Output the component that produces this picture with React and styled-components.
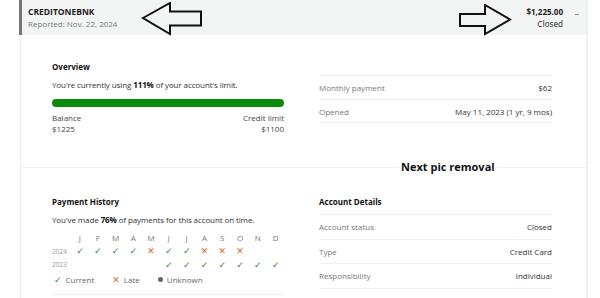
import React from 'react';
import styled, { createGlobalStyle } from 'styled-components';

const GlobalStyle = createGlobalStyle`
	html, body {
		margin: 0;
		padding: 0;
		background: #ffffff;
		font-family: 'Open Sans', 'Liberation Sans', sans-serif;
		color: #222;
	}
`;

const months = ['J', 'F', 'M', 'A', 'M', 'J', 'J', 'A', 'S', 'O', 'N', 'D'];
const history = [
	{ year: '2024', marks: ['c', 'c', 'c', 'c', 'l', 'c', 'c', 'l', 'l', 'l', '', ''] },
	{ year: '2023', marks: ['', '', '', '', '', 'c', 'c', 'c', 'c', 'c', 'c', 'c'] },
];

function Arrow({ dir }) {
	if (dir === 'left') {
		return (
			<svg width="62" height="34" viewBox="0 0 62 34">
				<path d="M2 16 L29 1 L29 9.5 L60 9.5 L60 23.5 L29 23.5 L29 32 Z" fill="none" stroke="#111" strokeWidth="2" strokeLinejoin="miter" />
			</svg>
		);
	}
	return (
		<svg width="54" height="32" viewBox="0 0 54 32">
			<path d="M1 10 L26 10 L26 1 L51 15.5 L26 30 L26 22 L1 22 Z" fill="none" stroke="#111" strokeWidth="2" strokeLinejoin="miter" />
		</svg>
	);
}

export default function App() {
	return (
		<>
			<GlobalStyle />
			<Page>
				<Card>
					<Header>
						<div>
							<Creditor>CREDITONEBNK</Creditor>
							<SubText>Reported: Nov. 22, 2024</SubText>
						</div>
						<HeaderRight>
							<div>
								<Amount>$1,225.00</Amount>
								<Status>Closed</Status>
							</div>
							<Toggle />
						</HeaderRight>
						<LeftArrow>
							<Arrow dir="left" />
						</LeftArrow>
						<RightArrow>
							<Arrow dir="right" />
						</RightArrow>
					</Header>

					<Section $divider>
						<Column>
							<Title>Overview</Title>
							<Text>
								You're currently using <b>111%</b> of your account's limit.
							</Text>
							<Bar />
							<Split>
								<span>Balance</span>
								<span>Credit limit</span>
							</Split>
							<Split>
								<span>$1225</span>
								<span>$1100</span>
							</Split>
						</Column>
						<Column $pad={40}>
							<Rows>
								<Row>
									<Label>Monthly payment</Label>
									<Value>$62</Value>
								</Row>
								<Row>
									<Label>Opened</Label>
									<Value>May 11, 2023 (1 yr, 9 mos)</Value>
								</Row>
							</Rows>
						</Column>
						<Note>Next pic removal</Note>
					</Section>

					<Section>
						<Column>
							<Title>Payment History</Title>
							<Text>
								You've made <b>76%</b> of payments for this account on time.
							</Text>
							<Grid>
								<span />
								{months.map((m, i) => (
									<Month key={i}>{m}</Month>
								))}
								{history.map((h) => (
									<React.Fragment key={h.year}>
										<Year>{h.year}</Year>
										{h.marks.map((mk, i) => (
											<Mark key={i} $late={mk === 'l'}>
												{mk === 'c' ? '✓' : mk === 'l' ? '✕' : ''}
											</Mark>
										))}
									</React.Fragment>
								))}
							</Grid>
							<Legend>
								<LegendItem>
									<Mark as="span">✓</Mark> Current
								</LegendItem>
								<LegendItem>
									<Mark as="span" $late>✕</Mark> Late
								</LegendItem>
								<LegendItem>
									<Dot /> Unknown
								</LegendItem>
							</Legend>
							<Rule />
						</Column>
						<Column>
							<Title>Account Details</Title>
							<Rows $top={6}>
								<Row $h={24.5}>
									<Label>Account status</Label>
									<Value>Closed</Value>
								</Row>
								<Row $h={24.5}>
									<Label>Type</Label>
									<Value>Credit Card</Value>
								</Row>
								<Row $h={24.5}>
									<Label>Responsibility</Label>
									<Value>Individual</Value>
								</Row>
								<Row $h={24.5}>
									<Label>Remarks</Label>
									<Value>Closed or paid account/zero balance</Value>
								</Row>
							</Rows>
						</Column>
					</Section>
				</Card>
			</Page>
		</>
	);
}

const Page = styled.div`
	width: 600px;
	height: 298px;
	overflow: hidden;
	padding-left: 20px;
	box-sizing: border-box;
`;

const Card = styled.div`
	width: 565px;
	border-left: 1px solid #eeeeee;
	border-right: 2px solid #f0f0f0;
	min-height: 400px;
`;

const Header = styled.div`
	position: relative;
	height: 35px;
	margin-left: -2px;
	border-left: 3px solid #767676;
	background: #f3f4f4;
	display: flex;
	justify-content: space-between;
	align-items: center;
	padding: 0 7px 0 6px;
	box-sizing: border-box;
`;

const Creditor = styled.div`
	font-size: 8.5px;
	font-weight: 700;
	color: #222;
	line-height: 13px;
`;

const SubText = styled.div`
	font-size: 8px;
	color: #7a7a7a;
	line-height: 12px;
`;

const HeaderRight = styled.div`
	display: flex;
	align-items: flex-start;
	gap: 12px;
	text-align: right;
`;

const Amount = styled.div`
	font-size: 8px;
	font-weight: 700;
	line-height: 12px;
`;

const Status = styled.div`
	font-size: 8px;
	font-weight: 600;
	color: #555;
	line-height: 12px;
`;

const Toggle = styled.span`
	width: 4px;
	height: 1.5px;
	margin-top: 8px;
	background: #999;
`;

const LeftArrow = styled.div`
	position: absolute;
	left: 119px;
	top: 2px;
	line-height: 0;
`;

const RightArrow = styled.div`
	position: absolute;
	left: 437px;
	top: 4px;
	line-height: 0;
`;

const Section = styled.div`
	position: relative;
	display: grid;
	grid-template-columns: 232px 233px;
	column-gap: 35px;
	padding: ${(p) => (p.$divider ? '26px 31px 0' : '28px 31px 0')};
	height: ${(p) => (p.$divider ? '133px' : 'auto')};
	box-sizing: border-box;
	border-bottom: ${(p) => (p.$divider ? '1px solid #f0f0f0' : 'none')};
`;

const Column = styled.div`
	display: flex;
	flex-direction: column;
	padding-top: ${(p) => (p.$pad ? `${p.$pad - 26}px` : '0')};
`;

const Title = styled.div`
	font-size: 8px;
	font-weight: 700;
	color: #111;
	line-height: 12px;
`;

const Text = styled.div`
	font-size: 8px;
	color: #333;
	line-height: 12px;
	margin-top: 6px;
	letter-spacing: -0.1px;

	b {
		font-weight: 700;
		color: #111;
	}
`;

const Bar = styled.div`
	height: 8px;
	border-radius: 4px;
	background: #0b8a0b;
	margin: 8px 0 5px;
`;

const Split = styled.div`
	display: flex;
	justify-content: space-between;
	font-size: 8px;
	color: #444;
	line-height: 11px;
`;

const Rows = styled.div`
	display: flex;
	flex-direction: column;
	margin-top: ${(p) => p.$top || 0}px;
`;

const Row = styled.div`
	display: flex;
	justify-content: space-between;
	align-items: center;
	height: ${(p) => p.$h || 24}px;
	border-top: 1px solid #f0f0f0;
	box-sizing: border-box;
	&:last-child {
		border-bottom: 1px solid #f0f0f0;
	}
`;

const Label = styled.span`
	font-size: 8px;
	color: #777;
`;

const Value = styled.span`
	font-size: 8px;
	color: #333;
`;

const Note = styled.div`
	position: absolute;
	left: 378px;
	bottom: -8px;
	padding: 0 2px;
	background: #fff;
	font-size: 11px;
	font-weight: 700;
	color: #111;
	line-height: 16px;
`;

const Grid = styled.div`
	display: grid;
	grid-template-columns: 19px repeat(12, 17.8px);
	grid-auto-rows: 13.5px;
	align-items: center;
	margin-top: 5px;
`;

const Month = styled.span`
	font-size: 8px;
	color: #777;
	text-align: center;
`;

const Year = styled.span`
	font-size: 6.5px;
	color: #999;
`;

const Mark = styled.span`
	font-size: 9px;
	text-align: center;
	font-family: 'DejaVu Sans', sans-serif;
	color: ${(p) => (p.$late ? '#e0662c' : '#2e8b2e')};
	font-weight: 400;
`;

const Legend = styled.div`
	display: flex;
	gap: 18px;
	margin-top: 2px;
	padding-left: 2px;
	font-size: 8px;
	color: #666;
	line-height: 12px;
`;

const LegendItem = styled.span`
	display: flex;
	align-items: center;
	gap: 4px;
`;

const Dot = styled.span`
	width: 5px;
	height: 5px;
	border-radius: 50%;
	background: #666;
`;

const Rule = styled.div`
	height: 1px;
	background: #f0f0f0;
	margin-top: 8px;
`;
